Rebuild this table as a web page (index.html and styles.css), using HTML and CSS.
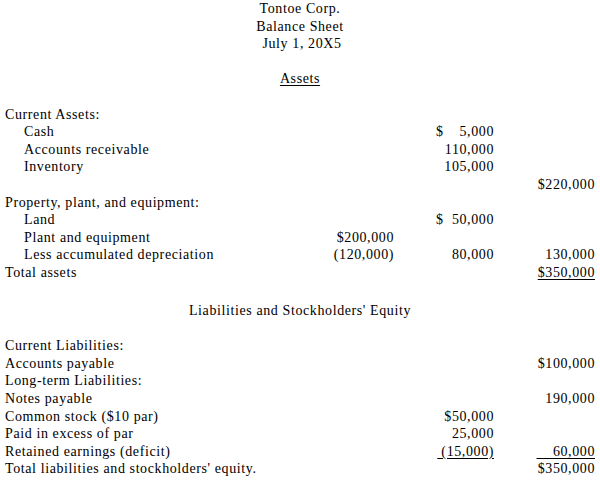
FILE: index.html
```html
<!DOCTYPE html>
<html>
<head>
<meta charset="utf-8">
<link rel="stylesheet" href="styles.css">
</head>
<body>
<div class="sheet">
  <div class="title">Tontoe Corp.</div>
  <div class="title">Balance Sheet</div>
  <div class="title">&nbsp;July 1, 20X5</div>
  <div class="blank"></div>
  <div class="title"><span class="ul">Assets</span></div>
  <div class="blank"></div>

  <div class="row"><span class="lbl">Current Assets:</span></div>
  <div class="row"><span class="lbl ind">Cash</span><span class="c1"></span><span class="c2"><span class="dol"><span>$</span><span>5,000</span></span></span><span class="c3"></span></div>
  <div class="row"><span class="lbl ind">Accounts receivable</span><span class="c1"></span><span class="c2">110,000</span><span class="c3"></span></div>
  <div class="row"><span class="lbl ind">Inventory</span><span class="c1"></span><span class="c2">105,000</span><span class="c3"></span></div>
  <div class="row"><span class="lbl"></span><span class="c1"></span><span class="c2"></span><span class="c3">$220,000</span></div>
  <div class="row"><span class="lbl">Property, plant, and equipment:</span></div>
  <div class="row"><span class="lbl ind">Land</span><span class="c1"></span><span class="c2"><span class="dol"><span>$</span><span>50,000</span></span></span><span class="c3"></span></div>
  <div class="row"><span class="lbl ind">Plant and equipment</span><span class="c1">$200,000</span><span class="c2"></span><span class="c3"></span></div>
  <div class="row"><span class="lbl ind">Less accumulated depreciation</span><span class="c1">(120,000)</span><span class="c2">80,000</span><span class="c3">130,000</span></div>
  <div class="row"><span class="lbl">Total assets</span><span class="c1"></span><span class="c2"></span><span class="c3"><span class="ul">$350,000</span></span></div>
  <div class="blank"></div>

  <div class="title heading">Liabilities and Stockholders' Equity</div>
  <div class="blank"></div>

  <div class="row"><span class="lbl">Current Liabilities:</span></div>
  <div class="row"><span class="lbl">Accounts payable</span><span class="c1"></span><span class="c2"></span><span class="c3">$100,000</span></div>
  <div class="row"><span class="lbl">Long-term Liabilities:</span></div>
  <div class="row"><span class="lbl">Notes payable</span><span class="c1"></span><span class="c2"></span><span class="c3">190,000</span></div>
  <div class="row"><span class="lbl">Common stock ($10 par)</span><span class="c1"></span><span class="c2">$50,000</span><span class="c3"></span></div>
  <div class="row"><span class="lbl">Paid in excess of par</span><span class="c1"></span><span class="c2">25,000</span><span class="c3"></span></div>
  <div class="row"><span class="lbl">Retained earnings (deficit)</span><span class="c1"></span><span class="c2"><span class="ul pre"> (15,000)</span></span><span class="c3"><span class="ul pre">    60,000</span></span></div>
  <div class="row"><span class="lbl">Total liabilities and stockholders' equity.</span><span class="c1"></span><span class="c2"></span><span class="c3">$350,000</span></div>
</div>
</body>
</html>
```

FILE: styles.css
```css
html, body {
  margin: 0;
  padding: 0;
  background: #ffffff;
}

.sheet {
  width: 600px;
  box-sizing: border-box;
  padding: 0 5px 0 5px;
  font-family: "Liberation Serif", "Times New Roman", serif;
  font-size: 14px;
  letter-spacing: 0.6px;
  line-height: 17.6px;
  color: #000000;
}

.title {
  text-align: center;
  height: 17.6px;
  white-space: pre;
}

.heading {
  margin-top: 3px;
}

.blank {
  height: 17.6px;
}

.row {
  display: grid;
  grid-template-columns: 1fr 70px 100px 101px;
  height: 17.6px;
  white-space: nowrap;
}

.lbl {
  text-align: left;
}

.ind {
  padding-left: 19px;
}

.c1, .c2, .c3 {
  text-align: right;
}

.dol {
  display: inline-flex;
  justify-content: space-between;
  width: 58px;
}

.ul {
  text-decoration: underline;
  text-underline-offset: 2px;
}

.pre {
  white-space: pre;
}
```
